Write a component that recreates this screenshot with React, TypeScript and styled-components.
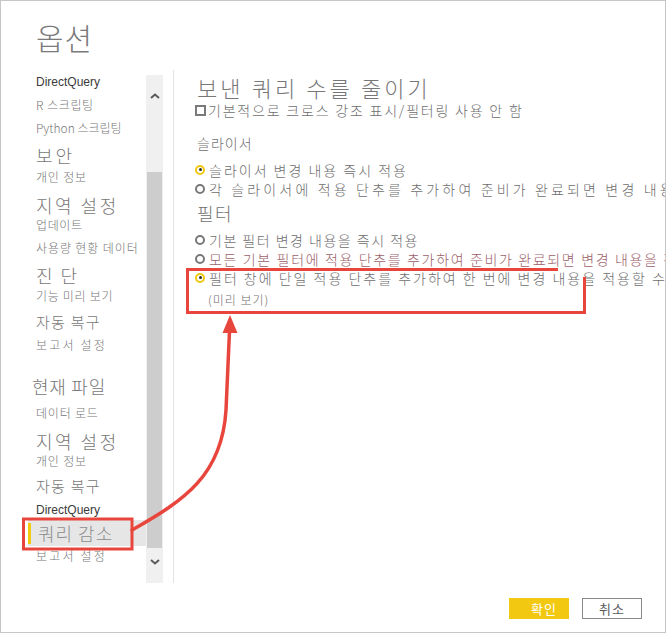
import React from "react";
import styled, { createGlobalStyle, css } from "styled-components";

const KR = `"Noto Sans CJK KR", "Noto Sans", sans-serif`;
const LATIN = `"Liberation Sans", "Noto Sans CJK KR", sans-serif`;

const GlobalStyle = createGlobalStyle`
  html, body { margin: 0; padding: 0; background: #fff; }
  body { font-family: ${KR}; font-weight: 300; }
`;

const Page = styled.div`
  position: relative;
  width: 667px;
  height: 634px;
`;

const Dialog = styled.div`
  box-sizing: border-box;
  width: 666px;
  height: 633px;
  border: 1px solid #c6c6c6;
  background: #fff;
  display: flex;
  flex-direction: column;
  overflow: hidden;
`;

const Title = styled.h1`
  margin: 21px 0 0 35px;
  font: 300 30px/30px ${KR};
  color: #7a7a7a;
  letter-spacing: 1px;
`;

const Body = styled.div`
  display: flex;
  margin-top: 18px;
  height: 513px;
  padding-left: 27px;
`;

const Sidebar = styled.div`
  display: flex;
  flex: none;
  margin-top: 4px;
  height: 509px;
`;

const NavList = styled.nav`
  width: 118px;
  display: flex;
  flex-direction: column;
  overflow: hidden;
`;

type NavSize = "small" | "medium" | "large";

const sizeMap: Record<NavSize, { fs: number; lh: number }> = {
  small: { fs: 12, lh: 16 },
  medium: { fs: 15, lh: 20 },
  large: { fs: 18, lh: 24 },
};

const NavItem = styled.div<{
  $size: NavSize;
  $gap: number;
  $spacing?: number;
  $indent?: number;
  $latin?: boolean;
}>`
  margin-top: ${(p) => p.$gap}px;
  padding-left: ${(p) => p.$indent ?? 8}px;
  font-family: ${(p) => (p.$latin ? LATIN : KR)};
  font-weight: ${(p) => (p.$latin ? 400 : 300)};
  font-size: ${(p) => sizeMap[p.$size].fs}px;
  line-height: ${(p) => sizeMap[p.$size].lh}px;
  height: ${(p) => sizeMap[p.$size].lh}px;
  letter-spacing: ${(p) => p.$spacing ?? 0}px;
  color: ${(p) => (p.$latin ? "#3a3a3a" : "#777")};
  white-space: nowrap;
`;

const SelectedItem = styled.div<{ $gap: number }>`
  margin-top: ${(p) => p.$gap}px;
  height: 26px;
  line-height: 26px;
  background: #e6e6e6;
  display: flex;
  align-items: center;
  font-size: 18px;
  letter-spacing: 1px;
  color: #8e8e8e;
  white-space: nowrap;
  &::before {
    content: "";
    width: 3px;
    height: 21px;
    background: #f2c811;
    margin-right: 7px;
  }
`;

const Scrollbar = styled.div`
  width: 17px;
  margin-top: 1px;
  height: 508px;
  background: #f0f0f0;
  display: grid;
  grid-template-rows: 42px 55px 376px 28px 7px;
`;

const ArrowCell = styled.div<{ $row: number }>`
  grid-row: ${(p) => p.$row};
  display: flex;
  align-items: center;
  justify-content: center;
`;

const Thumb = styled.div`
  grid-row: 3;
  margin: 0 1px;
  background: #cdcdcd;
`;

const Divider = styled.div`
  width: 1px;
  flex: none;
  margin-left: 10px;
  background: #e3e3e3;
`;

const Content = styled.div`
  flex: 1;
  min-width: 0;
  margin-left: 23px;
  display: flex;
  flex-direction: column;
  white-space: nowrap;
  color: #6e6e6e;
`;

const Heading = styled.h2`
  margin: 3px 0 0 0;
  font: 300 22px/28px ${KR};
  letter-spacing: 3.1px;
  color: #777;
`;

const CheckRow = styled.label`
  display: flex;
  align-items: center;
  height: 18px;
  margin-left: -2px;
  gap: 2px;
  font-size: 14px;
  letter-spacing: 1.8px;
`;

const Checkbox = styled.span`
  box-sizing: border-box;
  width: 11px;
  height: 11px;
  border: 2px solid #7a7a7a;
  flex: none;
`;

const SectionLabel = styled.div<{ $big?: boolean; $gap: number }>`
  margin-top: ${(p) => p.$gap}px;
  ${(p) =>
    p.$big
      ? css`
          font-size: 18px;
          line-height: 24px;
          letter-spacing: 1.5px;
        `
      : css`
          font-size: 14px;
          line-height: 18px;
          letter-spacing: 1px;
        `}
  color: #707070;
`;

const RadioRow = styled.div<{ $gap?: number; $spacing: number; $accent?: boolean }>`
  display: flex;
  align-items: center;
  height: 19px;
  margin-top: ${(p) => p.$gap ?? 0}px;
  margin-left: -2px;
  gap: 4px;
  font-size: 14px;
  letter-spacing: ${(p) => p.$spacing}px;
  color: ${(p) => (p.$accent ? "#9b6169" : "#6e6e6e")};
`;

const Radio = styled.span<{ $checked?: boolean }>`
  box-sizing: border-box;
  flex: none;
  width: 10px;
  height: 10px;
  border-radius: 50%;
  border: 2px solid ${(p) => (p.$checked ? "#f2c811" : "#787878")};
  display: flex;
  align-items: center;
  justify-content: center;
  ${(p) =>
    p.$checked &&
    css`
      &::after {
        content: "";
        width: 3px;
        height: 3px;
        border-radius: 50%;
        background: #2a2a2a;
      }
    `}
`;

const Note = styled.div`
  margin-top: 5px;
  margin-left: 11px;
  font-size: 12px;
  line-height: 16px;
  letter-spacing: 1px;
  color: #6e6e6e;
`;

const Footer = styled.div`
  display: flex;
  justify-content: flex-end;
  gap: 13px;
  margin-top: 15px;
  padding-right: 23px;
`;

const Button = styled.button<{ $primary?: boolean }>`
  box-sizing: border-box;
  width: 60px;
  height: 21px;
  padding: 0;
  font: 400 13px/19px ${KR};
  letter-spacing: 1px;
  cursor: pointer;
  ${(p) =>
    p.$primary
      ? css`
          background: #f2c811;
          color: #fff;
          border: none;
          padding-left: 10px;
        `
      : css`
          background: #fff;
          color: #5a5a5a;
          border: 1px solid #8a8a8a;
        `}
`;

const Overlay = styled.svg`
  position: absolute;
  left: 0;
  top: 0;
  pointer-events: none;
`;

const Chevron = ({ up }: { up?: boolean }) => (
  <svg width="10" height="6" viewBox="0 0 10 6">
    <polyline
      points={up ? "1,5 5,1.5 9,5" : "1,1 5,4.5 9,1"}
      fill="none"
      stroke="#5a5a5a"
      strokeWidth="2"
    />
  </svg>
);

type Nav = {
  label: string;
  size: NavSize;
  gap: number;
  spacing?: number;
  indent?: number;
  latin?: boolean;
};

const navTop: Nav[] = [
  { label: "DirectQuery", size: "small", gap: 0, latin: true },
  { label: "R 스크립팅", size: "small", gap: 7, spacing: 0.6 },
  { label: "Python 스크립팅", size: "small", gap: 7 },
  { label: "보안", size: "large", gap: 7, spacing: 3 },
  { label: "개인 정보", size: "small", gap: 2, spacing: 0.8 },
  { label: "지역 설정", size: "large", gap: 8, spacing: 2.5 },
  { label: "업데이트", size: "small", gap: 0, spacing: 0.6 },
  { label: "사용량 현황 데이터", size: "small", gap: 7, spacing: 0.9 },
  { label: "진단", size: "large", gap: 7, spacing: 8 },
  { label: "기능 미리 보기", size: "small", gap: 1, spacing: 0.7 },
  { label: "자동 복구", size: "medium", gap: 8, spacing: 1.25 },
  { label: "보고서 설정", size: "small", gap: 5, spacing: 2.2 },
  { label: "현재 파일", size: "large", gap: 21, indent: 4, spacing: 0.75 },
  { label: "데이터 로드", size: "small", gap: 7, spacing: 0.8 },
  { label: "지역 설정", size: "large", gap: 8, spacing: 2.5 },
  { label: "개인 정보", size: "small", gap: 0, spacing: 0.8 },
  { label: "자동 복구", size: "medium", gap: 7, spacing: 1.25 },
  { label: "DirectQuery", size: "small", gap: 6, latin: true },
];

export default function App() {
  return (
    <>
      <GlobalStyle />
      <Page>
        <Dialog>
          <Title>옵션</Title>
          <Body>
            <Sidebar>
              <NavList>
                {navTop.map((n, i) => (
                  <NavItem
                    key={i}
                    $size={n.size}
                    $gap={n.gap}
                    $spacing={n.spacing}
                    $indent={n.indent}
                    $latin={n.latin}
                  >
                    {n.label}
                  </NavItem>
                ))}
                <SelectedItem $gap={2}>쿼리 감소</SelectedItem>
                <NavItem $size="small" $gap={2} $spacing={2.2}>
                  보고서 설정
                </NavItem>
              </NavList>
              <Scrollbar>
                <ArrowCell $row={1}>
                  <Chevron up />
                </ArrowCell>
                <Thumb />
                <ArrowCell $row={4}>
                  <Chevron />
                </ArrowCell>
              </Scrollbar>
            </Sidebar>
            <Divider />
            <Content>
              <Heading>보낸 쿼리 수를 줄이기</Heading>
              <CheckRow>
                <Checkbox />
                기본적으로 크로스 강조 표시/필터링 사용 안 함
              </CheckRow>
              <SectionLabel $gap={15}>슬라이서</SectionLabel>
              <RadioRow $gap={8} $spacing={2}>
                <Radio $checked />
                슬라이서 변경 내용 즉시 적용
              </RadioRow>
              <RadioRow $spacing={3.15}>
                <Radio />
                각 슬라이서에 적용 단추를 추가하여 준비가 완료되면 변경 내용을 적용합니다
              </RadioRow>
              <SectionLabel $big $gap={3}>
                필터
              </SectionLabel>
              <RadioRow $gap={5} $spacing={1.5}>
                <Radio />
                기본 필터 변경 내용을 즉시 적용
              </RadioRow>
              <RadioRow $spacing={1.65} $accent>
                <Radio />
                모든 기본 필터에 적용 단추를 추가하여 준비가 완료되면 변경 내용을 적용합니다
              </RadioRow>
              <RadioRow $spacing={2}>
                <Radio $checked />
                필터 창에 단일 적용 단추를 추가하여 한 번에 변경 내용을 적용할 수 있습니다
              </RadioRow>
              <Note>(미리 보기)</Note>
            </Content>
          </Body>
          <Footer>
            <Button $primary>확인</Button>
            <Button>취소</Button>
          </Footer>
        </Dialog>
        <Overlay width="667" height="634" viewBox="0 0 667 634">
          <g fill="none" stroke="#e8463d" strokeWidth="3">
            <path d="M558 269.5 L187.5 269.5 L187.5 312.5 L584.5 312.5 L584.5 277" />
            <rect x="23.5" y="519" width="108.5" height="30" />
            <path
              d="M132 530 C 185 500, 222 475, 226 410 L 229.5 331"
              strokeWidth="3.5"
              strokeLinecap="round"
            />
          </g>
          <polygon points="230,315 222.5,333 237.5,333" fill="#e8463d" />
        </Overlay>
      </Page>
    </>
  );
}
